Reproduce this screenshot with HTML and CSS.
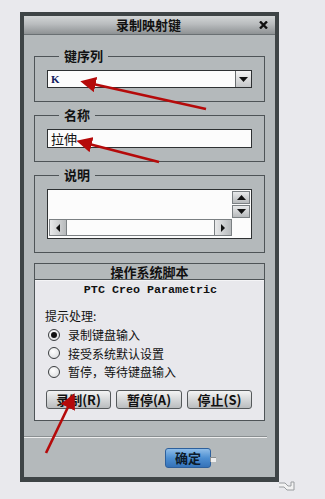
FILE: index.html
```html
<!DOCTYPE html>
<html lang="zh">
<head>
<meta charset="utf-8">
<title>录制映射键</title>
<link rel="stylesheet" href="styles.css">
</head>
<body>
<div class="page">
  <div class="dialog">
    <div class="titlebar">
      <span class="title">录制映射键</span>
      <span class="close"><svg width="9" height="8" viewBox="0 0 9 8"><path d="M1 0.5L8 7.5M8 0.5L1 7.5" stroke="#111" stroke-width="2.4"/></svg></span>
    </div>
    <div class="dbody">
      <fieldset class="group g1">
        <legend>键序列</legend>
        <div class="combo">
          <span class="combo-text">K</span>
          <span class="combo-btn"><svg width="9" height="5" viewBox="0 0 9 5"><path d="M0 0H9L4.5 5Z" fill="#111"/></svg></span>
        </div>
      </fieldset>
      <fieldset class="group g2">
        <legend>名称</legend>
        <div class="textbox">拉伸</div>
      </fieldset>
      <fieldset class="group g3">
        <legend>说明</legend>
        <div class="memo">
          <div class="memo-area"></div>
          <div class="vscroll">
            <span class="sbtn"><svg width="9" height="5" viewBox="0 0 9 5"><path d="M0 5H9L4.5 0Z" fill="#111"/></svg></span>
            <span class="sbtn"><svg width="9" height="5" viewBox="0 0 9 5"><path d="M0 0H9L4.5 5Z" fill="#111"/></svg></span>
          </div>
          <div class="hscroll">
            <span class="hbtn"><svg width="4" height="8" viewBox="0 0 4 8"><path d="M4 0V8L0 4Z" fill="#111"/></svg></span>
            <span class="htrack"></span>
            <span class="hbtn"><svg width="4" height="8" viewBox="0 0 4 8"><path d="M0 0V8L4 4Z" fill="#111"/></svg></span>
          </div>
          <div class="corner"></div>
        </div>
      </fieldset>
      <div class="script">
        <div class="script-head">操作系统脚本</div>
        <div class="script-body">
          <div class="app">PTC Creo Parametric</div>
          <div class="prompt">提示处理:</div>
          <div class="radios">
            <div class="radio r1"><span class="dot checked"></span><span>录制键盘输入</span></div>
            <div class="radio"><span class="dot"></span><span>接受系统默认设置</span></div>
            <div class="radio"><span class="dot"></span><span>暂停，等待键盘输入</span></div>
          </div>
          <div class="buttons">
            <span class="btn">录制(R)</span>
            <span class="btn b2">暂停(A)</span>
            <span class="btn">停止(S)</span>
          </div>
        </div>
      </div>
      <div class="sep"></div>
      <div class="footer">
        <span class="ok">确定</span>
        <span class="mini"></span>
      </div>
    </div>
  </div>
  <svg class="ghost" width="18" height="12" viewBox="0 0 18 12"><path d="M1 3H7L10 6H13V2H16V10H9L6 7H1" fill="#f2f2f2" stroke="#9a9da0" stroke-width="1"/></svg>
  <svg class="arrows" width="325" height="499" viewBox="0 0 325 499">
    <defs>
      <marker id="ah" markerWidth="6" markerHeight="6" refX="1" refY="3" orient="auto" markerUnits="strokeWidth">
        <path d="M0 0L6 3L0 6Z" fill="#b50a0a"/>
      </marker>
    </defs>
    <line x1="206" y1="109" x2="93" y2="84" stroke="#b50a0a" stroke-width="2.6" marker-end="url(#ah)"/>
    <line x1="159" y1="162" x2="89" y2="144" stroke="#b50a0a" stroke-width="2.6" marker-end="url(#ah)"/>
    <line x1="46" y1="453" x2="69" y2="405" stroke="#b50a0a" stroke-width="2.6" marker-end="url(#ah)"/>
  </svg>
</div>
</body>
</html>
```
FILE: styles.css
```css
html, body {
  margin: 0;
  padding: 0;
  background: #e9e9ed;
}
.page {
  position: relative;
  width: 325px;
  height: 499px;
  overflow: hidden;
  padding-top: 12px;
  box-sizing: border-box;
  font-family: "Noto Sans CJK SC", "Liberation Sans", sans-serif;
  color: #111;
}
.dialog {
  margin-left: 20px;
  width: 259px;
  box-sizing: border-box;
  border: 4px solid #3e4446;
  border-bottom-width: 5px;
  background: #b4b9bb;
}
.titlebar {
  height: 18px;
  border-bottom: 1px solid #6a7073;
  background: linear-gradient(#d2d5d6, #b9bcbe 45%, #8e9294);
  display: flex;
  align-items: center;
  justify-content: center;
  position: relative;
}
.title {
  font-size: 13px;
  font-weight: bold;
  line-height: 18px;
  margin-left: -2px;
}
.close {
  position: absolute;
  right: 7px;
  top: 5px;
  display: flex;
}
.dbody {
  padding: 13px 10px 9px;
}
.group {
  margin: 0;
  border: 1px solid #4e5457;
  padding: 6px 12px 13px;
  min-inline-size: 0;
}
.group legend {
  font-size: 13px;
  font-weight: bold;
  line-height: 16px;
  padding: 0 5px;
  margin-left: 12px;
}
.g2, .g3 {
  margin-top: 5px;
}
.combo {
  height: 18px;
  box-sizing: border-box;
  border: 1px solid #2e3133;
  background: #fcfcfc;
  display: flex;
}
.combo-text {
  flex: 1;
  font-family: "Liberation Serif", serif;
  font-weight: bold;
  font-size: 11px;
  line-height: 16px;
  padding-left: 3px;
  color: #122060;
}
.combo-btn {
  width: 15px;
  border-left: 1px solid #6a6e70;
  background: linear-gradient(#f4f4f4, #c4c6c8);
  display: flex;
  align-items: center;
  justify-content: center;
}
.textbox {
  height: 19px;
  box-sizing: border-box;
  border: 1px solid #2e3133;
  background: #fcfcfc;
  font-size: 13px;
  line-height: 17px;
  padding-left: 3px;
}
.memo {
  height: 50px;
  box-sizing: border-box;
  border: 1px solid #2e3133;
  background: #fcfcfc;
  padding: 1px 1px 2px;
  display: grid;
  grid-template-columns: 183px 18px;
  grid-template-rows: 28px 17px;
}
.vscroll {
  display: flex;
  flex-direction: column;
  gap: 1px;
}
.sbtn {
  height: 13px;
  box-sizing: border-box;
  border: 1px solid #7b8083;
  background: linear-gradient(#e8e9ea, #b7babc);
  display: flex;
  align-items: center;
  justify-content: center;
}
.hscroll {
  display: flex;
  border: 1px solid #7b8083;
  box-sizing: border-box;
}
.hbtn {
  width: 16px;
  background: linear-gradient(90deg, #e8e9ea, #b7babc);
  display: flex;
  align-items: center;
  justify-content: center;
}
.hbtn:first-child { border-right: 1px solid #7b8083; }
.hbtn:last-child { border-left: 1px solid #7b8083; }
.htrack {
  flex: 1;
  background: #fcfcfc;
}
.script {
  margin-top: 10px;
  border: 1px solid #4e5457;
}
.script-head {
  height: 15px;
  border-bottom: 1px solid #4e5457;
  text-align: center;
  font-size: 13px;
  font-weight: bold;
  line-height: 15px;
}
.script-body {
  background: #e8e8ec;
  border-top: 1px solid #f4f4f6;
  padding: 2px 10px 11px;
}
.app {
  text-align: center;
  font-family: "Liberation Mono", monospace;
  font-weight: bold;
  font-size: 11.7px;
  line-height: 14px;
  margin-left: 2px;
}
.prompt {
  margin-top: 10px;
  font-size: 12px;
  line-height: 18px;
}
.radios {
  display: flex;
  flex-direction: column;
}
.radio {
  height: 18.5px;
  display: flex;
  align-items: center;
  gap: 8px;
  padding-left: 3px;
  font-size: 12px;
}
.r1 { height: 19px; }
.dot {
  width: 12px;
  height: 12px;
  box-sizing: border-box;
  border-radius: 50%;
  border: 1px solid #3a3d3f;
  background: radial-gradient(circle at 40% 35%, #ffffff, #d6d8da);
  display: flex;
  align-items: center;
  justify-content: center;
}
.dot.checked::after {
  content: "";
  width: 6px;
  height: 6px;
  border-radius: 50%;
  background: #111;
}
.buttons {
  margin-top: 8.5px;
  display: flex;
  gap: 5px;
  padding-left: 1px;
}
.btn {
  width: 65px;
  height: 19px;
  box-sizing: border-box;
  border: 1px solid #55595b;
  border-radius: 3px;
  background: linear-gradient(#f4f4f4, #d6d8d9 50%, #babdbf);
  font-size: 13px;
  font-weight: bold;
  line-height: 17px;
  text-align: center;
}
.b2 { width: 66px; }
.sep {
  margin: 15px 0 0 -10px;
  width: 243px;
  border-top: 1px solid #8a8f91;
  border-bottom: 1px solid #eeeeee;
}
.footer {
  margin-top: 10px;
  padding-left: 131px;
  display: flex;
  align-items: flex-end;
}
.ok {
  width: 46px;
  height: 20px;
  box-sizing: border-box;
  border: 1px solid #2d609c;
  border-radius: 3px;
  background: linear-gradient(#8fbde8, #4d8fd2 50%, #3572b8);
  font-size: 13px;
  font-weight: bold;
  line-height: 18px;
  text-align: center;
  color: #0d1a2a;
}
.mini {
  width: 6px;
  height: 5px;
  margin: 0 0 6px -1px;
  background: #eeeeee;
  border-top: 1px solid #8a8e90;
  border-left: 1px solid #8a8e90;
  box-sizing: border-box;
}
.arrows {
  position: absolute;
  left: 0;
  top: 0;
  pointer-events: none;
}
.ghost {
  position: absolute;
  left: 278px;
  top: 480px;
}
```
